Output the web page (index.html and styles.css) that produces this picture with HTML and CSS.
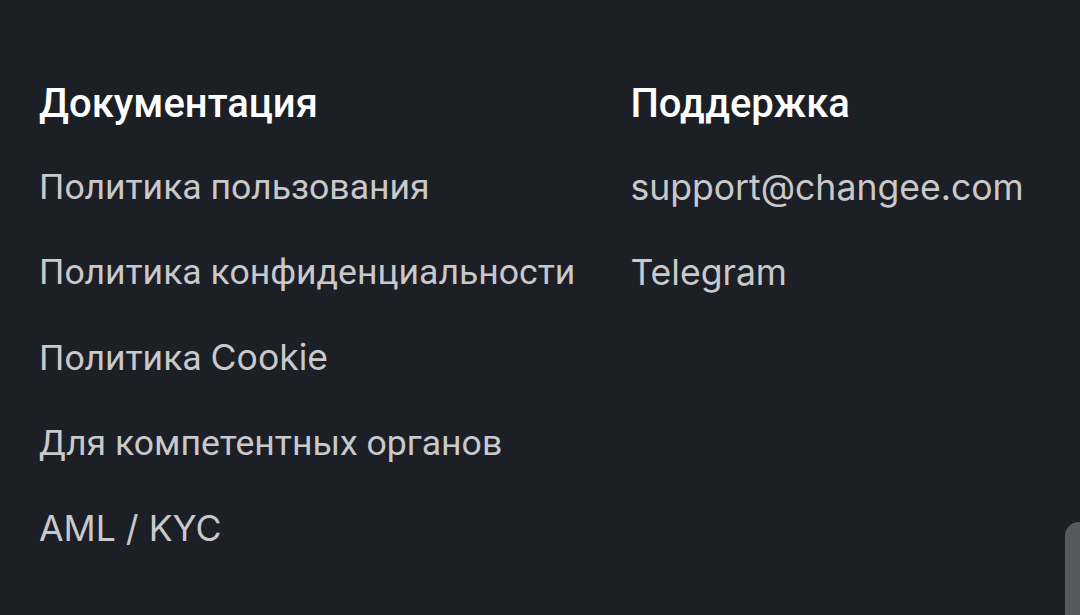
FILE: index.html
```html
<!DOCTYPE html>
<html lang="ru">
<head>
    <meta charset="UTF-8">
    <meta name="viewport" content="width=device-width, initial-scale=1.0">
    <title>Footer</title>
    <link rel="stylesheet" href="styles.css">
</head>
<body>

<footer class="footer">
    <div class="footer-col">
        <h3 class="footer-title">Документация</h3>
        <a class="footer-link" href="#">Политика пользования</a>
        <a class="footer-link" href="#">Политика конфиденциальности</a>
        <a class="footer-link" href="#">Политика <span class="lat">Cookie</span></a>
        <a class="footer-link" href="#">Для компетентных органов</a>
        <a class="footer-link lat" href="#">AML / KYC</a>
    </div>
    <div class="footer-col">
        <h3 class="footer-title">Поддержка</h3>
        <a class="footer-link lat" href="#">support@changee.com</a>
        <a class="footer-link lat" href="#">Telegram</a>
    </div>
</footer>

<div class="scroll-thumb"></div>

</body>
</html>
```

FILE: styles.css
```css
body {
    margin: 0;
    height: 100vh;
    background: #1c1f26;
    font-family: Roboto, "Noto Sans", sans-serif;
    overflow: hidden;
}
.footer {
    display: flex;
    gap: 55px;
    padding: 78px 39px 0;
}
.footer-col {
    display: flex;
    flex-direction: column;
}
.footer-title {
    margin: 0 0 15px;
    font-size: 40px;
    font-weight: 500;
    line-height: 52px;
    color: #fff;
}
.footer-link {
    display: block;
    font-size: 35.6px;
    line-height: 85px;
    color: #c9c9cb;
    text-decoration: none;
    white-space: nowrap;
}
.lat {
    font-family: Inter, Roboto, sans-serif;
}
.scroll-thumb {
    position: absolute;
    right: 0;
    top: 522px;
    width: 15px;
    height: 120px;
    background: #58595d;
    border-radius: 14px 0 0 0;
}
```
